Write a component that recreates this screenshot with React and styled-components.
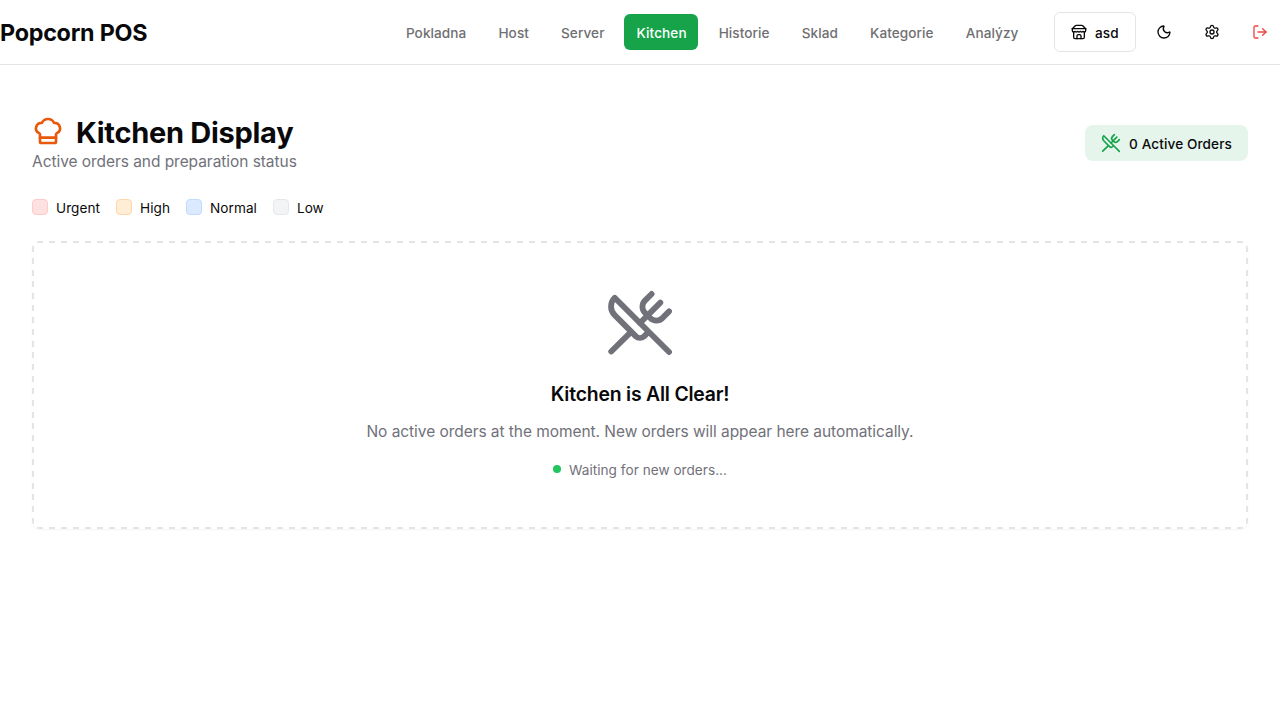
import React from "react";
import styled, { createGlobalStyle } from "styled-components";
import { ChefHat, LogOut, Moon, Settings, UtensilsCrossed } from "lucide-react";

const GlobalStyle = createGlobalStyle`
  *, *::before, *::after { box-sizing: border-box; }
  body {
    margin: 0;
    background: #fff;
    color: #09090b;
    font-family: Inter, "Liberation Sans", sans-serif;
    font-size: 15.5px;
    line-height: 24px;
    letter-spacing: -0.055px;
  }
  h1, h2, p { margin: 0; }
  button { font: inherit; letter-spacing: inherit; color: inherit; background: none; border: 0; padding: 0; cursor: pointer; }
  svg { display: block; flex-shrink: 0; }
`;

const Header = styled.header`
  display: flex;
  align-items: center;
  justify-content: space-between;
  height: 65px;
  border-bottom: 1px solid #e4e4e7;
`;

const Brand = styled.span`
  padding-top: 2px;
  font-size: 23.3px;
  line-height: 32px;
  font-weight: 700;
  letter-spacing: -0.24px;
`;

const HeaderRight = styled.div`
  display: flex;
  align-items: center;
  gap: 24px;
`;

const Nav = styled.nav`
  display: flex;
  align-items: center;
  gap: 8px;
`;

const NavLink = styled.a`
  padding: 9px 11.5px 7px 12.5px;
  border-radius: 6px;
  font-size: 13.6px;
  line-height: 20px;
  font-weight: 500;
  letter-spacing: 0.075px;
  color: ${(p) => (p.$active ? "#fff" : "#6f6f72")};
  background: ${(p) => (p.$active ? "#16a34a" : "transparent")};
`;

const Actions = styled.div`
  display: flex;
  align-items: center;
  gap: 8px;
`;

const StoreButton = styled.button`
  display: flex;
  align-items: center;
  gap: 8px;
  width: 82px;
  height: 40px;
  && { padding: 0 16px; border: 1px solid #e4e4e7; }
  border-radius: 6px;
  && { font-size: 13.6px; font-weight: 500; letter-spacing: 0.1px; }
`;

const IconButton = styled.button`
  display: flex;
  align-items: center;
  justify-content: center;
  width: 40px;
  height: 40px;
  && { color: ${(p) => (p.$danger ? "#ef4444" : "#09090b")}; }
`;

const Main = styled.main`
  display: flex;
  flex-direction: column;
  gap: 24px;
  padding: 48px 32px;
`;

const PageHead = styled.div`
  display: flex;
  align-items: center;
  justify-content: space-between;
`;

const Label = styled.span`
  padding-top: 2px;
`;

const Title = styled.h1`
  display: flex;
  align-items: center;
  gap: 12px;
  height: 36px;
  font-size: 29px;
  line-height: 36px;
  font-weight: 700;
  letter-spacing: -0.28px;
  svg { color: #ea580c; }
  ${Label} { padding-top: 4px; }
`;

const Muted = styled.p`
  padding-top: 2px;
  line-height: 22px;
  color: #71717a;
`;

const OrdersBadge = styled.div`
  display: flex;
  align-items: center;
  gap: 8px;
  padding: 8px 16px;
  border-radius: 8px;
  background: #e6f5ec;
  font-size: 13.6px;
  line-height: 18px;
  font-weight: 500;
  letter-spacing: 0.1px;
  svg { color: #16a34a; }
`;

const Legend = styled.div`
  display: flex;
  gap: 16px;
`;

const LegendItem = styled.div`
  display: flex;
  align-items: center;
  gap: 8px;
  font-size: 13.6px;
  line-height: 18px;
  letter-spacing: 0.05px;
`;

const Swatch = styled.span`
  width: 16px;
  height: 16px;
  border-radius: 4px;
  border: 1px solid ${(p) => p.$border};
  background: ${(p) => p.$fill};
`;

const dashesX = "repeating-linear-gradient(90deg, #e4e4e7 0 6px, transparent 6px 12px)";
const dashesY = "repeating-linear-gradient(180deg, #e4e4e7 0 6px, transparent 6px 11.826px)";

const EmptyCard = styled.section`
  display: flex;
  flex-direction: column;
  align-items: center;
  padding: 50px;
  border-radius: 8px;
  background:
    ${dashesX} 5px 0 / calc(100% - 10px) 2px no-repeat,
    ${dashesX} 5px 100% / calc(100% - 10px) 2px no-repeat,
    ${dashesY} 0 5px / 2px calc(100% - 10px) no-repeat,
    ${dashesY} 100% 5px / 2px calc(100% - 10px) no-repeat;
  box-shadow: 0 1px 2px rgba(0, 0, 0, 0.05);
  text-align: center;
`;

const EmptyIcon = styled(UtensilsCrossed)`
  color: #71717a;
  transform: scale(1.09);
`;

const EmptyTitle = styled.h2`
  margin-top: 24px;
  padding-top: 2px;
  font-size: 19.4px;
  line-height: 26px;
  font-weight: 600;
  letter-spacing: -0.2px;
`;

const EmptyText = styled(Muted)`
  margin-top: 12px;
`;

const Waiting = styled.div`
  display: flex;
  align-items: center;
  gap: 8px;
  margin-top: 16px;
  font-size: 13.6px;
  line-height: 18px;
  letter-spacing: 0.03px;
  color: #71717a;
`;

const Dot = styled.span`
  width: 8px;
  height: 8px;
  border-radius: 50%;
  background: #22c55e;
`;

const StoreIcon = () => (
  <svg width="16" height="16" viewBox="0 0 24 24" fill="none" stroke="currentColor" strokeWidth="2" strokeLinecap="round" strokeLinejoin="round">
    <path d="m2 7 4.41-4.41A2 2 0 0 1 7.83 2h8.34a2 2 0 0 1 1.42.59L22 7" />
    <path d="M4 12v8a2 2 0 0 0 2 2h12a2 2 0 0 0 2-2v-8" />
    <path d="M15 22v-4a2 2 0 0 0-2-2h-2a2 2 0 0 0-2 2v4" />
    <path d="M2 7h20" />
    <path d="M22 7v3a2 2 0 0 1-2 2a2.7 2.7 0 0 1-1.59-.63.7.7 0 0 0-.82 0A2.7 2.7 0 0 1 16 12a2.7 2.7 0 0 1-1.59-.63.7.7 0 0 0-.82 0A2.7 2.7 0 0 1 12 12a2.7 2.7 0 0 1-1.59-.63.7.7 0 0 0-.82 0A2.7 2.7 0 0 1 8 12a2.7 2.7 0 0 1-1.59-.63.7.7 0 0 0-.82 0A2.7 2.7 0 0 1 4 12a2 2 0 0 1-2-2V7" />
  </svg>
);

const links = ["Pokladna", "Host", "Server", "Kitchen", "Historie", "Sklad", "Kategorie", "Analýzy"];

const priorities = [
  { label: "Urgent", fill: "#fee2e2", border: "#fecaca" },
  { label: "High", fill: "#ffedd5", border: "#fed7aa" },
  { label: "Normal", fill: "#dbeafe", border: "#bfdbfe" },
  { label: "Low", fill: "#f3f4f6", border: "#e5e7eb" },
];

export default function App() {
  return (
    <>
      <GlobalStyle />
      <Header>
        <Brand>Popcorn POS</Brand>
        <HeaderRight>
          <Nav>
            {links.map((label) => (
              <NavLink key={label} $active={label === "Kitchen"}>{label}</NavLink>
            ))}
          </Nav>
          <Actions>
            <StoreButton><StoreIcon /><Label>asd</Label></StoreButton>
            <IconButton aria-label="Theme"><Moon size={16} /></IconButton>
            <IconButton aria-label="Settings"><Settings size={16} /></IconButton>
            <IconButton aria-label="Log out" $danger><LogOut size={16} /></IconButton>
          </Actions>
        </HeaderRight>
      </Header>
      <Main>
        <PageHead>
          <div>
            <Title><ChefHat size={32} /><Label>Kitchen Display</Label></Title>
            <Muted>Active orders and preparation status</Muted>
          </div>
          <OrdersBadge><UtensilsCrossed size={20} /><Label>0 Active Orders</Label></OrdersBadge>
        </PageHead>
        <Legend>
          {priorities.map((p) => (
            <LegendItem key={p.label}><Swatch $fill={p.fill} $border={p.border} /><Label>{p.label}</Label></LegendItem>
          ))}
        </Legend>
        <EmptyCard>
          <EmptyIcon size={64} />
          <EmptyTitle>Kitchen is All Clear!</EmptyTitle>
          <EmptyText>No active orders at the moment. New orders will appear here automatically.</EmptyText>
          <Waiting><Dot /><Label>Waiting for new orders...</Label></Waiting>
        </EmptyCard>
      </Main>
    </>
  );
}
